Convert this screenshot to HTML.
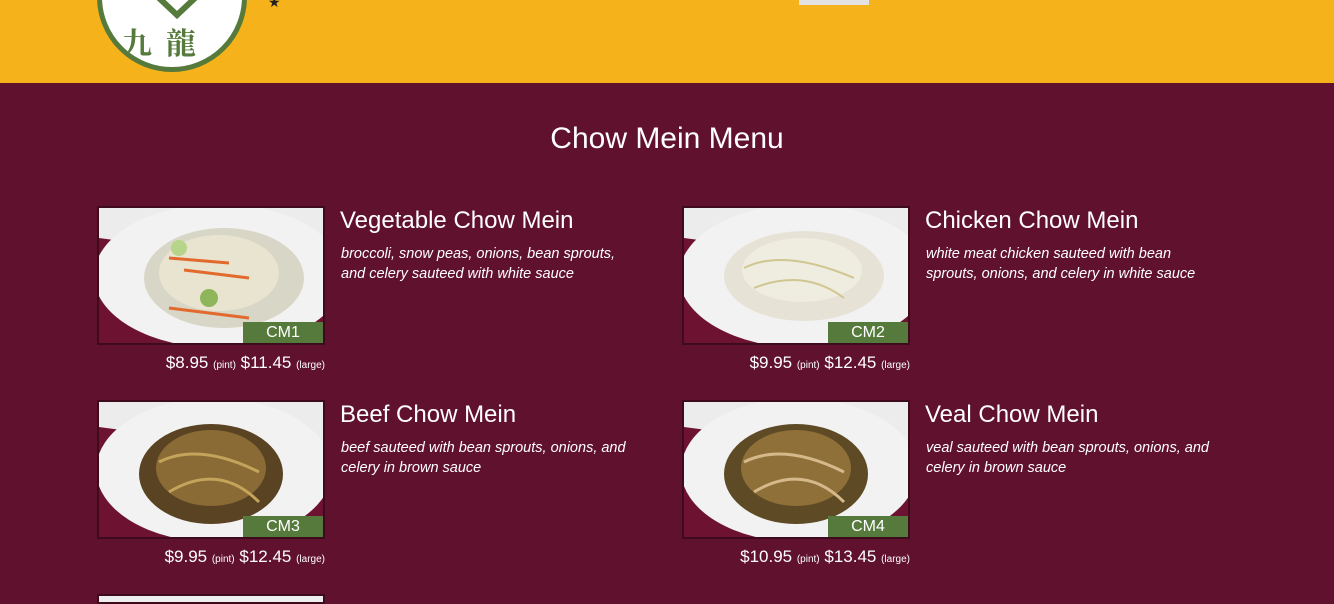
<!DOCTYPE html>
<html><head><meta charset="utf-8"><style>
*{margin:0;padding:0;box-sizing:border-box}
body{width:1334px;height:598px;overflow:hidden;background:#60112e;font-family:"Liberation Sans","DejaVu Sans",sans-serif;color:#fff;position:relative}
.hdr{position:absolute;left:0;top:0;width:1334px;height:83px;background:#f5b21a}
.logo{position:absolute;left:97px;top:-78px;width:150px;height:150px;border-radius:50%;background:#fff;border:5px solid #557a3c;overflow:hidden}
.logo .cn{position:absolute;left:20px;top:92px;font-family:"Noto Serif CJK SC","WenQuanYi Zen Hei",serif;font-weight:bold;font-size:30px;color:#557a3c;letter-spacing:14px}
.gray{position:absolute;left:799px;top:0;width:70px;height:5px;background:#e2e2e2}
h1{position:absolute;top:122px;width:100%;text-align:center;font-weight:normal;font-size:30px}
.card{position:absolute;width:560px;height:180px}
.img{position:absolute;left:0;top:0;width:228px;height:139px;border:2px solid #3e0a1d;overflow:hidden;background:#7a1434}
.badge{position:absolute;right:0;bottom:0;width:80px;height:21px;background:#557a3c;font-size:16px;text-align:center;line-height:21px}
.name{position:absolute;left:243px;top:1px;font-size:24px}
.desc{position:absolute;left:244px;top:38px;width:290px;font-size:14.5px;font-style:italic;line-height:20px}
.price{position:absolute;left:0;width:228px;top:147px;text-align:right;font-size:17px}
.price small{font-size:10px}
</style></head><body>
<div class="hdr">
<div class="logo"><svg style="position:absolute;left:30px;top:50px" width="90" height="50"><polyline points="10,5 45,38 80,5" fill="none" stroke="#557a3c" stroke-width="6"/></svg><div class="cn">九龍</div></div>
<div style="position:absolute;left:268px;top:-6px;font-size:14px;color:#222">★</div>
<div class="gray"></div>
</div>
<h1>Chow Mein Menu</h1>

<div class="card" style="left:97px;top:206px">
<div class="img"><svg width="228" height="139"><rect width="228" height="139" fill="#6e1232"/><path d="M0 0H228V60L0 30Z" fill="#ececec"/><ellipse cx="120" cy="68" rx="125" ry="72" fill="#f2f2f2"/><ellipse cx="125" cy="70" rx="80" ry="50" fill="#d8d6c6"/><ellipse cx="120" cy="65" rx="60" ry="38" fill="#e8e4d0"/><path d="M70 50L130 55M85 62L150 70M70 100L150 110" stroke="#e26a2c" stroke-width="3"/><circle cx="110" cy="90" r="9" fill="#8fb55a"/><circle cx="80" cy="40" r="8" fill="#b6d48a"/></svg><div class="badge">CM1</div></div>
<div class="name">Vegetable Chow Mein</div>
<div class="desc">broccoli, snow peas, onions, bean sprouts, and celery sauteed with white sauce</div>
<div class="price">$8.95 <small>(pint)</small> $11.45 <small>(large)</small></div>
</div>

<div class="card" style="left:682px;top:206px">
<div class="img"><svg width="228" height="139"><rect width="228" height="139" fill="#6e1232"/><path d="M0 0H228V60L0 30Z" fill="#ececec"/><ellipse cx="120" cy="68" rx="125" ry="72" fill="#f2f2f2"/><ellipse cx="120" cy="68" rx="80" ry="45" fill="#e6e3d6"/><ellipse cx="118" cy="62" rx="60" ry="32" fill="#efece0"/><path d="M60 60Q100 40 170 70M70 80Q120 60 160 90" stroke="#d0c690" stroke-width="2" fill="none"/></svg><div class="badge">CM2</div></div>
<div class="name">Chicken Chow Mein</div>
<div class="desc">white meat chicken sauteed with bean sprouts, onions, and celery in white sauce</div>
<div class="price">$9.95 <small>(pint)</small> $12.45 <small>(large)</small></div>
</div>

<div class="card" style="left:97px;top:400px">
<div class="img"><svg width="228" height="139"><rect width="228" height="139" fill="#6e1232"/><path d="M0 0H228V55L0 25Z" fill="#ececec"/><ellipse cx="115" cy="68" rx="118" ry="72" fill="#f2f2f2"/><ellipse cx="112" cy="72" rx="72" ry="50" fill="#5a4322"/><ellipse cx="112" cy="66" rx="55" ry="38" fill="#8a6a35"/><path d="M60 60Q100 40 160 70M70 90Q120 60 160 100" stroke="#c4a45a" stroke-width="3" fill="none"/></svg><div class="badge">CM3</div></div>
<div class="name">Beef Chow Mein</div>
<div class="desc">beef sauteed with bean sprouts, onions, and celery in brown sauce</div>
<div class="price">$9.95 <small>(pint)</small> $12.45 <small>(large)</small></div>
</div>

<div class="card" style="left:682px;top:400px">
<div class="img"><svg width="228" height="139"><rect width="228" height="139" fill="#6e1232"/><path d="M0 0H228V55L0 25Z" fill="#ececec"/><ellipse cx="115" cy="68" rx="118" ry="72" fill="#f2f2f2"/><ellipse cx="112" cy="72" rx="72" ry="50" fill="#5e4a24"/><ellipse cx="112" cy="66" rx="55" ry="38" fill="#8e7038"/><path d="M60 60Q100 40 160 70M70 90Q120 60 160 100" stroke="#d6b98a" stroke-width="3" fill="none"/></svg><div class="badge">CM4</div></div>
<div class="name">Veal Chow Mein</div>
<div class="desc">veal sauteed with bean sprouts, onions, and celery in brown sauce</div>
<div class="price">$10.95 <small>(pint)</small> $13.45 <small>(large)</small></div>
</div>

<div style="position:absolute;left:97px;top:594px;width:228px;height:10px;border:2px solid #3e0a1d;background:#eee"></div>
</body></html>
